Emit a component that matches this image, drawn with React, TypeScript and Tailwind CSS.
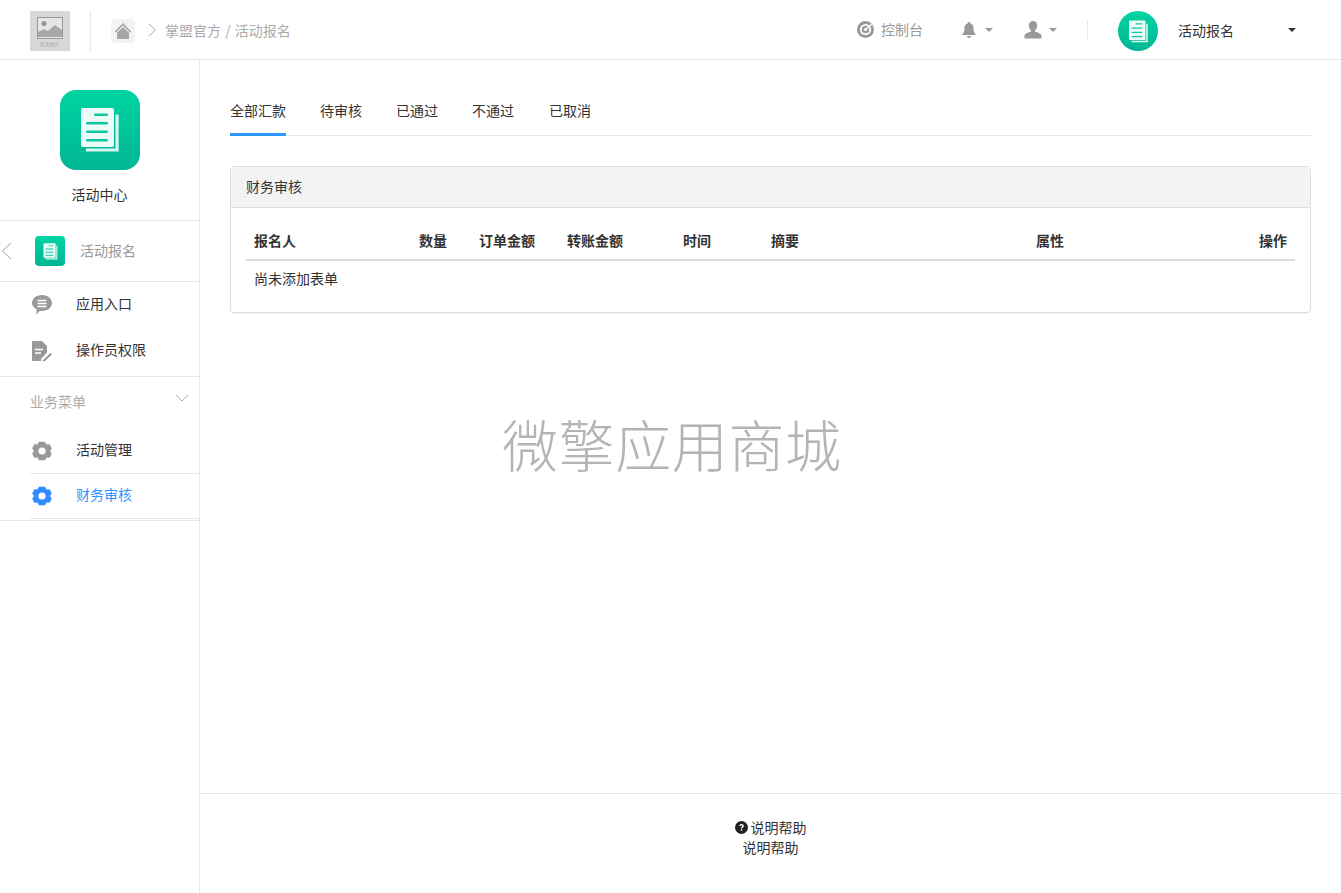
// App.tsx
import React from 'react';

const font = { fontFamily: '"Noto Sans CJK SC", "Liberation Sans", sans-serif' };

function DocIcon({ size, back = 'rgba(255,255,255,.85)', line = '#0cc79f' }: { size: number; back?: string; line?: string }) {
  return (
    <svg width={size} height={size} viewBox="0 0 40 46" fill="none">
      <path d="M6 41V44.6H38.6V7.4H35.5V41.5H6Z" fill={back} />
      <rect x="1" y="1" width="33" height="39" rx="2" fill="#ecfbf7" />
      <rect x="14" y="6.5" width="14" height="2.6" rx="1.3" fill={line} />
      <rect x="6" y="15" width="22" height="2.6" rx="1.3" fill={line} />
      <rect x="6" y="23.5" width="22" height="2.6" rx="1.3" fill={line} />
      <rect x="6" y="32" width="22" height="2.6" rx="1.3" fill={line} />
    </svg>
  );
}

function Gear({ color }: { color: string }) {
  return (
    <svg width="20" height="20" viewBox="0 0 20 20">
      <path
        fill={color}
        fillRule="evenodd"
        d="M7 .8h6l1.6 2.6 3-.2 2.2 4-1.7 2.8 1.7 2.8-2.2 4-3-.2L13 19.2H7l-1.6-2.6-3 .2-2.2-4L1.9 10 .2 7.2l2.2-4 3 .2L7 .8ZM10 6.4a3.6 3.6 0 1 0 0 7.2 3.6 3.6 0 0 0 0-7.2Z"
      />
    </svg>
  );
}

function Caret({ color = '#999' }: { color?: string }) {
  return <span className="ml-[9px] h-0 w-0 border-x-4 border-t-4 border-x-transparent" style={{ borderTopColor: color }} />;
}

const columns = ['报名人', '数量', '订单金额', '转账金额', '时间', '摘要', '属性', '操作'];

export default function App() {
  return (
    <div className="relative flex h-[893px] flex-col overflow-hidden bg-white text-sm text-[#333]" style={font}>
      {/* top bar */}
      <header className="flex h-[60px] shrink-0 items-center border-b border-[#e7e7e7] pl-[30px]">
        <div className="mt-[11px] flex h-10 w-10 flex-col items-center self-start bg-[#d8d8d8] pt-[6px]">
          <svg width="26" height="22" viewBox="0 0 26 22">
            <rect x="0.5" y="0.5" width="25" height="21" fill="#e6e6e6" stroke="#999" />
            <circle cx="7" cy="6.5" r="2.6" fill="#999" />
            <path d="M1 20v-5l6-3 4 2 7-6 7 5v7Z" fill="#a8a8a8" />
          </svg>
          <span className="mt-[1px] text-[5px] leading-[7px] text-[#aaa]">暂无图片</span>
        </div>
        <div className="ml-5 mt-[11px] h-10 w-px self-start bg-[#e7e7e7]" />
        <div className="ml-5 mt-[19px] flex h-6 w-6 items-center justify-center self-start rounded bg-[#f1f3f4]">
          <svg width="18" height="18" viewBox="0 0 18 18">
            <path d="M9 1 .8 9.4 2 10.4 9 3.4l7 7 1.2-1Z" fill="#a6a6a6" />
            <path d="M9 5 3 10.8V17h12v-6.2Z" fill="#a6a6a6" />
          </svg>
        </div>
        <svg className="ml-[13px]" width="9" height="14" viewBox="0 0 9 14" fill="none">
          <path d="M1 1l6.5 6L1 13" stroke="#aaa" />
        </svg>
        <span className="ml-2 text-[#aaa] [word-spacing:1px]">掌盟官方 / 活动报名</span>

        <div className="ml-auto flex items-center text-[#999]">
          <svg width="17" height="17" viewBox="0 0 17 17">
            <circle cx="8.5" cy="8.5" r="8.5" fill="#999" />
            <circle cx="8.5" cy="8.5" r="5.6" fill="#fff" />
            <circle cx="8.5" cy="8.5" r="3.8" fill="#999" />
            <circle cx="8.5" cy="8.5" r="1.6" fill="#fff" />
            <path d="M8.5 8.5 15 3" stroke="#fff" strokeWidth="1.2" />
          </svg>
          <span className="mb-[2px] ml-[7px]">控制台</span>
          <svg className="ml-[39px]" width="14" height="16" viewBox="0 0 14 16">
            <path d="M7 0a1.3 1.3 0 0 1 1.3 1.5C10.8 2.1 11.6 4 11.6 6.5c0 3 .7 4.3 2.1 5.7v.8H.3v-.8c1.4-1.4 2.1-2.7 2.1-5.7 0-2.5.8-4.4 3.3-5A1.3 1.3 0 0 1 7 0ZM5 14h4a2 2 0 0 1-4 0Z" fill="#999" />
          </svg>
          <Caret />
          <svg className="ml-[31px]" width="18" height="18" viewBox="0 0 18 18">
            <path d="M9 0c2.7 0 4.2 2 4.2 4.6 0 2-.9 3.9-2.2 4.9v1.3c2.8.7 6.500 1.700 6.500 4.200V17.500H.5V15c0-2.500 3.700-3.500 6.500-4.200V9.500C5.700 8.500 4.800 6.600 4.800 4.600 4.800 2 6.300 0 9 0Z" fill="#999" />
          </svg>
          <span className="ml-[7px] h-0 w-0 border-x-4 border-t-4 border-x-transparent border-t-[#999]" />
          <div className="ml-[30px] h-[19px] w-px bg-[#e7e7e7]" />
        </div>

        <div className="ml-[30px] mt-[11px] flex h-10 w-10 items-center justify-center self-start rounded-full bg-gradient-to-b from-[#00d4a2] to-[#00b694]">
          <DocIcon size={23} />
        </div>
        <span className="ml-5 w-[110px] text-[#333]">活动报名</span>
        <span className="mr-[45px] h-0 w-0 border-x-4 border-t-4 border-x-transparent border-t-[#333]" />
      </header>

      <div className="flex min-h-0 flex-1">
        {/* side menu */}
        <aside className="flex w-[200px] shrink-0 flex-col border-r border-[#e7e7e7]">
          <div className="flex h-[160px] flex-col items-center pt-[30px]">
            <div className="flex h-20 w-20 items-center justify-center rounded-2xl bg-gradient-to-b from-[#00d4a2] to-[#00b694]">
              <DocIcon size={46} />
            </div>
            <span className="mt-[14px] leading-[20px] text-[#333]">活动中心</span>
          </div>
          <div className="flex h-[62px] items-center border-y border-[#e7e7e7] pl-[1px]">
            <svg width="11" height="18" viewBox="0 0 11 18" fill="none">
              <path d="M10 1 1.500 9l8.500 8" stroke="#9aa0a6" />
            </svg>
            <div className="ml-[23px] flex h-[30px] w-[30px] items-center justify-center rounded bg-gradient-to-b from-[#00d4a2] to-[#00b694]">
              <DocIcon size={17} />
            </div>
            <span className="mb-[2px] ml-[15px] text-[#999]">活动报名</span>
          </div>

          <div className="flex h-[46px] items-center pl-[32px]">
            <svg width="20" height="20" viewBox="0 0 20 20">
              <path d="M10 0c5.500 0 10 3.600 10 8s-4.500 8-10 8c-.7 0-1.300 0-2-.2L4.500 19.500V14.300C1.800 12.800 0 10.600 0 8c0-4.400 4.500-8 10-8Z" fill="#999" />
              <path d="M5.500 5.500h9M5.500 8.500h9M5.500 11.500h9" stroke="#fff" strokeWidth="1.500" />
            </svg>
            <span className="mb-[4px] ml-6">应用入口</span>
          </div>
          <div className="flex h-[46px] items-center pl-[32px]">
            <svg width="20" height="20" viewBox="0 0 20 20">
              <path d="M0 0h10l5 5v6.500L9 18v2H0Z" fill="#999" />
              <path d="M3 8.500h8M3 12h6" stroke="#fff" strokeWidth="1.500" />
              <path d="M10 20l8.500-8 1.500 1.500-8 7.500Z" fill="#999" />
            </svg>
            <span className="mb-[5px] ml-6">操作员权限</span>
          </div>

          <div className="mt-[2px] flex h-[53px] items-start justify-between border-t border-[#e7e7e7] pl-[30px] pr-[10px] pt-[14px]">
            <span className="leading-[20px] text-[#aaa]">业务菜单</span>
            <svg className="mt-[3px]" width="14" height="9" viewBox="0 0 14 9" fill="none">
              <path d="M1 1l6 6 6-6" stroke="#aaa" />
            </svg>
          </div>
          <div className="ml-[30px] flex h-[45px] items-center border-b border-[#e7e7e7] pl-[2px]">
            <Gear color="#999" />
            <span className="mb-[5px] ml-6">活动管理</span>
          </div>
          <div className="ml-[30px] flex h-[45px] items-center border-b border-[#e7e7e7] pl-[2px] text-[#2e94ff]">
            <Gear color="#2e8cff" />
            <span className="mb-[5px] ml-6">财务审核</span>
          </div>
          <div className="mt-[1px] border-t border-[#e7e7e7]" />
        </aside>

        {/* content */}
        <main className="flex min-w-0 flex-1 flex-col">
          <div className="flex-1 px-[30px] pt-[30px]">
            <nav className="flex h-[46px] border-b border-[#e7e7e7] text-[#333]">
              <span className="h-[46px] border-b-[3px] border-[#2d96ff] pt-[10px] leading-[20px]">全部汇款</span>
              <span className="ml-[34px] pt-[10px] leading-[20px]">待审核</span>
              <span className="ml-[34px] pt-[10px] leading-[20px]">已通过</span>
              <span className="ml-[34px] pt-[10px] leading-[20px]">不通过</span>
              <span className="ml-[35px] pt-[10px] leading-[20px]">已取消</span>
            </nav>

            <section className="mt-[30px] h-[147px] rounded border border-[#dedede] shadow-[0_1px_1px_rgba(0,0,0,.05)]">
              <div className="flex h-[41px] items-center border-b border-[#dedede] bg-[#f3f3f3] px-[15px] pb-[2px]">财务审核</div>
              <div className="px-[15px] pt-[15px]">
                <div className="grid h-[38px] grid-cols-[165px_60px_88px_116px_88px_265px_1fr_auto] items-center border-b-2 border-[#ddd] px-2 pb-[3px] font-bold">
                  {columns.map((name) => (
                    <span key={name}>{name}</span>
                  ))}
                </div>
                <div className="px-2 pt-[7px] leading-[20px]">尚未添加表单</div>
              </div>
            </section>
          </div>

          <footer className="flex h-[100px] flex-col items-center border-t border-[#e7e7e7] pt-[23px] leading-[20px] text-[#333]">
            <div className="flex items-center">
              <svg width="13" height="13" viewBox="0 0 13 13">
                <circle cx="6.500" cy="6.500" r="6.500" fill="#222" />
                <path d="M4.300 5c0-1.300 1-2.100 2.300-2.100S8.800 3.700 8.800 4.900c0 1.500-1.600 1.500-1.600 2.700H5.800c0-1.900 1.500-1.900 1.500-2.700 0-.4-.3-.7-.7-.7-.5 0-.8.300-.9.800Z" fill="#fff" />
                <rect x="5.800" y="8.300" width="1.400" height="1.500" fill="#fff" />
              </svg>
              <span className="ml-[3px]">说明帮助</span>
            </div>
            <span>说明帮助</span>
          </footer>
        </main>
      </div>

      {/* watermark */}
      <div className="pointer-events-none absolute left-[502px] top-[403px] text-[56px] font-light leading-[80px] tracking-[0.6px] text-[#b4b4b4]">微擎应用商城</div>
    </div>
  );
}
